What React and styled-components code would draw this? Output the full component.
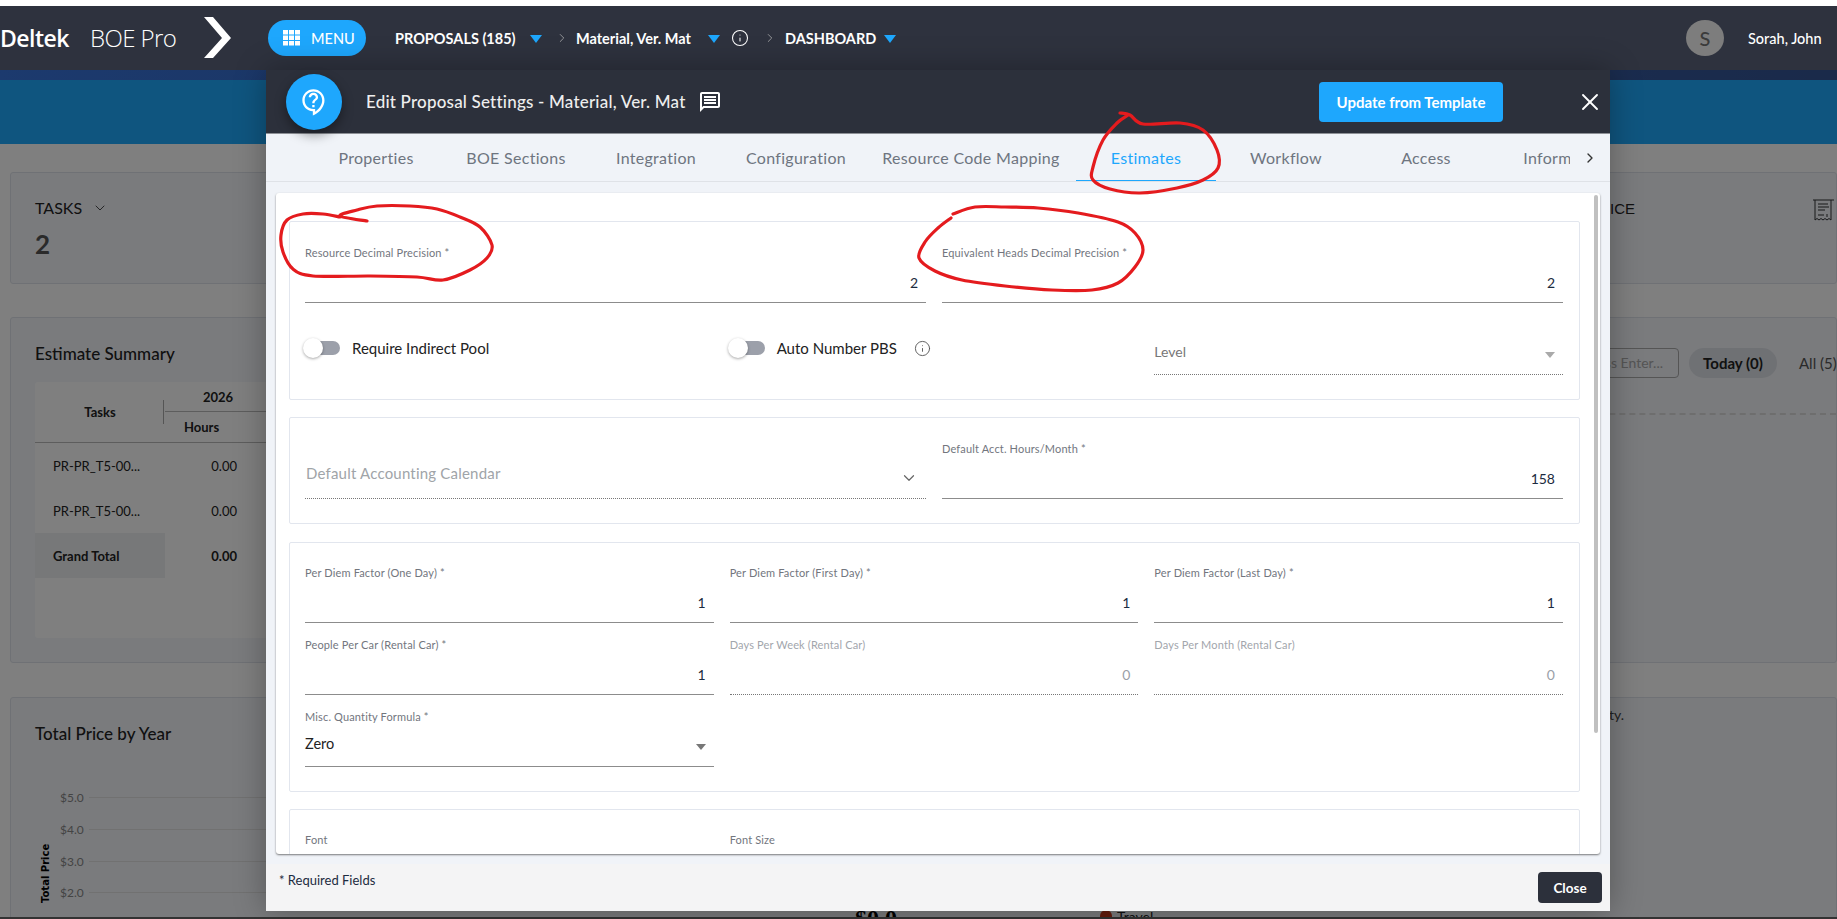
import React from "react";
import styled, { createGlobalStyle } from "styled-components";
import { ChevronDown, ChevronRight, Info, X } from "lucide-react";
import { MdOutlineContactSupport, MdOutlineMessage } from "react-icons/md";

const FONT = `"Lato", "Liberation Sans", sans-serif`;

const Global = createGlobalStyle`
  html, body { margin: 0; padding: 0; background: #fff; }
  * { box-sizing: border-box; }
  body { font-family: ${FONT}; }
`;

const Page = styled.div`
  position: relative; width: 1837px; height: 919px; overflow: hidden;
  padding-top: 6px; display: flex; flex-direction: column; background: #fff;
`;
const TopBar = styled.header`
  position: relative; z-index: 3; height: 64px; flex: none; background: #2e323e; color: #fff;
  display: flex; align-items: center;
`;
const Brand = styled.span`
  font: 600 23px/1 "Open Sans", sans-serif; margin-left: 0; letter-spacing: -0.5px; width: 90px;
`;
const Product = styled.span`
  font: 300 24px/1 "Open Sans", sans-serif; width: 114px; letter-spacing: -0.6px;
`;
const MenuPill = styled.div`
  margin-left: 36px; width: 98px; height: 36px; border-radius: 18px; background: #1ea7fd;
  display: flex; align-items: center; padding-left: 15px; gap: 10px; font-size: 14.5px; font-weight: 500;
`;
const Crumbs = styled.nav`
  margin-left: 29px; display: flex; align-items: center; font-size: 14.5px; font-weight: 700; white-space: nowrap;
`;
const Crumb = styled.span`
  width: ${(p) => p.$w}px;
`;
const Caret = styled.span`
  width: 0; height: 0; border-left: 6.5px solid transparent; border-right: 6.5px solid transparent;
  border-top: 8px solid #1ea7fd; margin: 2px ${(p) => p.$right ?? 0}px 0 ${(p) => p.$left ?? 12}px;
`;
const User = styled.div`
  margin-left: auto; display: flex; align-items: center; gap: 24px; padding-right: 9px; font-size: 14.5px; font-weight: 500; white-space: nowrap;
`;
const UserName = styled.span`
  width: 80px;
`;
const Avatar = styled.div`
  width: 38px; height: 36px; border-radius: 50%; background: #7d7d7d; color: #3b3b3b;
  display: flex; align-items: center; justify-content: center; font-size: 20px;
`;
const Band = styled.div`
  height: 10px; flex: none; background: linear-gradient(90deg, #3874dc, #345494);
`;
const Banner = styled.div`
  height: 64px; flex: none; background: #1eaaff;
`;
const Main = styled.main`
  flex: 1; min-height: 0; overflow: hidden; padding: 28px 0 0 10px; background: #fff;
  display: flex; flex-direction: column; color: #222;
`;
const Card = styled.section`
  flex: none; height: ${(p) => p.$h}px; margin-bottom: ${(p) => p.$mb ?? 0}px;
  background: #f4f6fb; border: 1px solid #dfe3ea; border-radius: 3px; display: flex;
  padding: ${(p) => p.$pad ?? "0 0 0 24px"};
`;
const StatLeft = styled.div`
  padding-top: 25px;
`;
const StatTitle = styled.div`
  font-size: 16px; display: flex; align-items: center; gap: 10px; line-height: 20px; color: #222;
`;
const StatValue = styled.div`
  font-size: 26px; line-height: 30px; font-weight: 700; color: #555; margin-top: 11px;
`;
const StatRight = styled.div`
  margin-left: auto; padding-top: 26px; display: flex; align-items: flex-start; gap: 178px; padding-right: 2px;
  font: 400 15px/20px "Liberation Sans", sans-serif;
`;
const Column = styled.div`
  display: flex; flex-direction: column; width: ${(p) => p.$w}px; flex: none;
`;
const CardTitle = styled.h3`
  margin: ${(p) => p.$top ?? 0}px 0 0; font-size: 17px; font-weight: 500; line-height: 20px; color: #222;
`;
const SummaryTable = styled.div`
  margin-top: 18px; width: 700px; height: 256px; background: #fff; border-radius: 3px; font-size: 13px; color: #222;
`;
const TableHead = styled.div`
  height: 61px; display: grid; grid-template-columns: 130px 1fr; border-bottom: 1px solid #bbb;
`;
const TasksHead = styled.div`
  font-weight: 700; display: flex; align-items: center; justify-content: center; position: relative;
  &::after { content: ""; position: absolute; right: 1px; top: 18px; height: 24px; width: 1px; background: #aaa; }
`;
const YearCol = styled.div`
  font-weight: 700; display: grid; grid-template-rows: 30px 30px;
`;
const YearCell = styled.div`
  padding-left: 38px; display: flex; align-items: center; border-bottom: 1px solid #bbb;
`;
const HoursCell = styled.div`
  padding-left: 19px; display: flex; align-items: center;
`;
const TableRow = styled.div`
  display: grid; grid-template-columns: 130px 72px; height: 45px; align-items: center;
  font-weight: ${(p) => (p.$total ? 700 : 400)};
`;
const RowLabel = styled.div`
  height: 100%; display: flex; align-items: center; padding-left: 18px;
  background: ${(p) => (p.$total ? "#eef0f3" : "transparent")};
`;
const RowValue = styled.div`
  text-align: right;
`;
const Toolbar = styled.div`
  margin-left: auto; padding-top: 30px; width: 337px; flex: none; display: flex; flex-direction: column;
`;
const ToolRow = styled.div`
  display: flex; align-items: center; height: 30px; font-size: 15px; white-space: nowrap;
`;
const Search = styled.div`
  width: 180px; height: 30px; border: 1px solid #aaa; border-radius: 4px; flex: none; text-align: right;
  padding: 5px 15px 0 0; color: #aaa; font-size: 14px;
`;
const TodayPill = styled.div`
  margin-left: 10px; width: 88px; height: 30px; line-height: 30px; text-align: center; border-radius: 15px;
  background: #dfe2e8; font-weight: 700; flex: none; color: #222;
`;
const AllLink = styled.div`
  margin-left: 22px; color: #555;
`;
const Dashed = styled.div`
  margin-top: 35px; border-top: 2px dashed #ddd;
`;
const ChartCol = styled.div`
  width: 800px; flex: none; padding-top: 26px;
`;
const Chart = styled.div`
  margin-top: 38px; display: flex; margin-left: 0;
`;
const AxisTitle = styled.div`
  font: 700 10px/11px "DejaVu Sans", sans-serif; writing-mode: vertical-rl; transform: rotate(180deg);
  margin: 64px 9px 0 5px; height: 57px; color: #000; white-space: nowrap;
`;
const AxisRows = styled.div`
  flex: 1;
`;
const AxisRow = styled.div`
  height: 31.7px; display: flex; align-items: center; gap: 5px; font-size: 12px; color: #888;
  &::after { content: ""; flex: 1; height: 1px; background: #e2e2e2; }
`;
const MiddleCol = styled.div`
  flex: none; width: 245px; margin-left: 20px; padding-top: 208px; font: 700 24px/24px "Liberation Serif", serif; color: #000;
`;
const LegendCol = styled.div`
  flex: none; padding-top: 208px; display: flex; align-items: center; height: 228px; gap: 5px; font-size: 14px; color: #222;
`;
const LegendDot = styled.span`
  width: 12px; height: 12px; border-radius: 50%; background: #c8381a;
`;
const EmptyNote = styled.div`
  margin-left: auto; padding: 8px 212px 0 0; font-size: 14px; color: #444; align-self: flex-start;
`;
const BottomStrip = styled.div`
  height: 2px; flex: none; background: #666;
`;
const Backdrop = styled.div`
  position: absolute; inset: 70px 0 0 0; background: rgba(0, 0, 0, 0.5); z-index: 2;
`;
const Modal = styled.div`
  position: absolute; z-index: 4; left: 266px; top: 70px; width: 1344px; height: 841px;
  background: #f0f3f8; display: flex; flex-direction: column; box-shadow: 0 0 30px rgba(0, 0, 0, 0.3);
`;
const ModalHead = styled.div`
  height: 64px; flex: none; background: #2c303b; color: #fff; display: flex; align-items: center;
  padding-left: 20px; border-bottom: 1px solid #8d9096;
`;
const HelpBubble = styled.div`
  width: 56px; height: 56px; border-radius: 50%; background: #1ea7fd; display: flex; align-items: center;
  justify-content: center; box-shadow: 0 5px 12px rgba(0, 0, 0, 0.4); flex: none;
`;
const ModalTitle = styled.div`
  margin-left: 24px; font-size: 17px; font-weight: 500; color: #eee; width: 319px; white-space: nowrap; letter-spacing: 0.2px;
`;
const UpdateButton = styled.button`
  margin-left: auto; width: 184px; height: 40px; border: 0; border-radius: 4px; background: #1ea7fd; color: #fff;
  font: 700 15px ${FONT};
`;
const CloseX = styled.div`
  margin: 0 5px 0 72px; width: 30px; display: flex; justify-content: center;
`;
const TabBar = styled.div`
  height: 48px; flex: none; display: flex; padding-left: 40px; border-bottom: 1px solid #dfe2e7;
`;
const TabTrack = styled.div`
  flex: 1; min-width: 0; display: flex; overflow: hidden;
`;
const Tab = styled.div`
  flex: none; width: ${(p) => p.$w ?? 140}px; height: 48px; display: flex; align-items: center; justify-content: center;
  font-size: 16px; letter-spacing: 0.3px; white-space: nowrap;
  color: ${(p) => (p.$active ? "#1ea7fd" : "#6e7580")};
  border-bottom: 2px solid ${(p) => (p.$active ? "#1ea7fd" : "transparent")};
`;
const TabMore = styled.div`
  width: 40px; flex: none; display: flex; align-items: center; justify-content: center; color: #333;
`;
const Sheet = styled.div`
  position: relative; height: 661px; flex: none; margin: 11px 10px 0; background: #fff; overflow: hidden;
  padding: 28px 20px 0 13px; border-radius: 3px; box-shadow: 0 1px 2px rgba(0, 0, 0, 0.5);
`;
const Scroll = styled.div`
  position: absolute; right: 2px; top: 2px; width: 4px; height: 538px; background: #c0c0c0; border-radius: 2px;
`;
const Group = styled.div`
  border: 1px solid #e2e6ee; border-radius: 2px; background: #fff;
  padding: ${(p) => p.$top ?? 23}px 16px 24px 15px; margin-bottom: ${(p) => p.$mb ?? 17}px;
`;
const Cols = styled.div`
  display: grid; grid-template-columns: repeat(${(p) => p.$n}, 1fr); column-gap: 16px; row-gap: 14px;
  margin-top: ${(p) => p.$mt ?? 0}px;
`;
const FieldBox = styled.div`
  height: 58px; border-bottom: 1px ${(p) => (p.$off ? "dotted #777" : "solid #8c8c8c")};
  ${(p) => p.$bare && "border-bottom: 0; height: 16px;"}
`;
const FieldLabel = styled.div`
  font-size: 11px; line-height: 16px; height: 16px; letter-spacing: 0.15px; white-space: nowrap;
  color: ${(p) => (p.$off ? "#a2a6ac" : "#72767e")};
`;
const FieldValue = styled.div`
  margin-top: 12px; padding-right: 8px; text-align: right; font-size: 14px; line-height: 20px;
  color: ${(p) => (p.$off ? "#9aa0a8" : "#1c2b40")};
`;
const SelectValue = styled.div`
  margin-top: 9px; display: flex; justify-content: space-between; align-items: center; font-size: 14.5px; line-height: 20px;
  color: #222; padding-right: 8px;
`;
const SmallCaret = styled.span`
  width: 0; height: 0; border-left: 5px solid transparent; border-right: 5px solid transparent;
  border-top: 6px solid ${(p) => p.$c ?? "#777"}; margin-top: ${(p) => p.$top ?? 6}px;
`;
const CalendarBox = styled.div`
  height: 58px; border-bottom: 1px dotted #777; padding: 22px 8px 0 1px; display: flex; justify-content: space-between;
  color: #a0a4a8; font-size: 15px; line-height: 20px; letter-spacing: 0.2px;
`;
const ToggleRow = styled.div`
  display: flex; align-items: center; height: 20px; gap: 12px; font-size: 15px; color: #222; white-space: nowrap;
`;
const Toggle = styled.span`
  position: relative; width: 35px; height: 14px; flex: none; border-radius: 7px; background: #9ca0aa;
  &::before {
    content: ""; position: absolute; left: -2px; top: -3px; width: 20px; height: 20px; border-radius: 50%;
    background: #fff; box-shadow: 0 1px 3px rgba(0, 0, 0, 0.35);
  }
`;
const LevelBox = styled.div`
  height: 37px; border-bottom: 1px dotted #777; display: flex; justify-content: space-between; padding-right: 8px;
  font-size: 14px; line-height: 28px; color: #777;
`;
const Footer = styled.div`
  margin-top: 10px; flex: 1; background: #f4f4f5; display: flex; justify-content: space-between; align-items: flex-start;
  padding: 8px 8px 0 13px;
`;
const Required = styled.div`
  font-size: 13px; line-height: 16px; color: #1c2b40;
`;
const CloseButton = styled.button`
  width: 64px; height: 31px; background: #2c303b; color: #fff; border: 0; border-radius: 4px; font: 700 13.5px ${FONT};
`;
const Marks = styled.svg`
  position: absolute; left: 0; top: 0; z-index: 5; pointer-events: none;
`;

const smooth = (pts) => {
  let d = `M${pts[0][0]} ${pts[0][1]}`;
  for (let i = 0; i < pts.length - 1; i++) {
    const p0 = pts[i - 1] || pts[i];
    const p1 = pts[i];
    const p2 = pts[i + 1];
    const p3 = pts[i + 2] || p2;
    d += ` C${p1[0] + (p2[0] - p0[0]) / 6} ${p1[1] + (p2[1] - p0[1]) / 6} ${p2[0] - (p3[0] - p1[0]) / 6} ${p2[1] - (p3[1] - p1[1]) / 6} ${p2[0]} ${p2[1]}`;
  }
  return d;
};

const RED = [
  [[367,221],[340,216],[357,210],[377,206],[410,206],[437,209],[460,217],[480,227],[492,245],[487,258],[470,270],[443,280],[417,277],[370,276],[313,276],[293,269],[283,252],[281,235],[287,220],[303,214],[323,214],[340,217]],
  [[953,214],[975,207],[1005,207],[1038,208],[1078,213],[1118,222],[1135,233],[1143,250],[1135,267],[1118,283],[1092,290],[1052,290],[1005,286],[962,280],[935,271],[919,258],[925,242],[938,228],[951,218]],
  [[1120,113],[1130,115],[1143,124],[1180,123],[1203,130],[1217,150],[1218,168],[1203,180],[1177,188],[1140,193],[1110,189],[1093,180],[1093,167],[1103,140],[1117,123],[1128,115]],
];

const GridIcon = () => (
  <svg width="18" height="16" viewBox="0 0 18 16" fill="#fff">
    {[0, 6, 12].map((x) => [0, 5.5, 11].map((y) => <rect key={`${x}-${y}`} x={x} y={y} width="5" height="4.5" />))}
  </svg>
);
const LogoChevron = () => (
  <svg width="28" height="42" viewBox="0 0 28 42" fill="#fff">
    <path d="M0 0H9L27 21L9 41H0L18 21Z" />
  </svg>
);
const ReceiptIcon = () => (
  <svg width="21" height="23" viewBox="0 0 21 23" fill="none" stroke="#333" strokeWidth="1">
    <path d="M0 1H21M2 1V21l2-1.5 2 1.5 2-1.5 2 1.5 2-1.5 2 1.5 2-1.5 2 1.5V1M5 5h10M5 8h11M5 11h7M5 16h6M14 15v3" />
  </svg>
);

const TABS = [
  ["Properties"], ["BOE Sections"], ["Integration"], ["Configuration"], ["Resource Code Mapping", 210],
  ["Estimates", 140, true], ["Workflow"], ["Access"], ["Information"],
];

const Field = ({ label, value, off, req = true }) => (
  <FieldBox $off={off}>
    <FieldLabel $off={off}>{label}{req ? " *" : ""}</FieldLabel>
    <FieldValue $off={off}>{value}</FieldValue>
  </FieldBox>
);

export default function App() {
  return (
    <Page>
      <Global />
      <TopBar>
        <Brand>Deltek</Brand>
        <Product>BOE Pro</Product>
        <LogoChevron />
        <MenuPill><GridIcon />MENU</MenuPill>
        <Crumbs>
          <Crumb $w={123}>PROPOSALS (185)</Crumb>
          <Caret />
          <ChevronRight size={14} strokeWidth={1.2} color="#bbb" style={{ margin: "0 7px 0 13px" }} />
          <Crumb $w={120}>Material, Ver. Mat</Crumb>
          <Caret />
          <Info size={18} strokeWidth={1.4} style={{ margin: "0 0 0 11px" }} />
          <ChevronRight size={14} strokeWidth={1.2} color="#bbb" style={{ margin: "0 8px 0 14px" }} />
          <Crumb $w={87}>DASHBOARD</Crumb>
          <Caret />
        </Crumbs>
        <User><Avatar>S</Avatar><UserName>Sorah, John</UserName></User>
      </TopBar>
      <Band />
      <Banner />
      <Main>
        <Card $h={112} $mb={33}>
          <StatLeft>
            <StatTitle>TASKS <ChevronDown size={16} strokeWidth={1.2} /></StatTitle>
            <StatValue>2</StatValue>
          </StatLeft>
          <StatRight>
            <span>TOTAL PRICE</span>
            <ReceiptIcon />
          </StatRight>
        </Card>
        <Card $h={346} $mb={34}>
          <Column $w={720}>
            <CardTitle $top={26}>Estimate Summary</CardTitle>
            <SummaryTable>
              <TableHead>
                <TasksHead>Tasks</TasksHead>
                <YearCol>
                  <YearCell>2026</YearCell>
                  <HoursCell>Hours</HoursCell>
                </YearCol>
              </TableHead>
              <TableRow><RowLabel>PR-PR_T5-00...</RowLabel><RowValue>0.00</RowValue></TableRow>
              <TableRow><RowLabel>PR-PR_T5-00...</RowLabel><RowValue>0.00</RowValue></TableRow>
              <TableRow $total><RowLabel $total>Grand Total</RowLabel><RowValue>0.00</RowValue></TableRow>
            </SummaryTable>
          </Column>
          <Toolbar>
            <ToolRow>
              <Search>Press Enter...</Search>
              <TodayPill>Today (0)</TodayPill>
              <AllLink>All (5)</AllLink>
            </ToolRow>
            <Dashed />
          </Toolbar>
        </Card>
        <Card $h={300}>
          <ChartCol>
            <CardTitle>Total Price by Year</CardTitle>
            <Chart>
              <AxisTitle>Total Price</AxisTitle>
              <AxisRows>
                <AxisRow>$5.0</AxisRow>
                <AxisRow>$4.0</AxisRow>
                <AxisRow>$3.0</AxisRow>
                <AxisRow>$2.0</AxisRow>
              </AxisRows>
            </Chart>
          </ChartCol>
          <MiddleCol>$0.0</MiddleCol>
          <LegendCol><LegendDot />Travel</LegendCol>
          <EmptyNote>No recent activity.</EmptyNote>
        </Card>
      </Main>
      <BottomStrip />
      <Backdrop />
      <Modal>
        <ModalHead>
          <HelpBubble><MdOutlineContactSupport size={28} color="#fff" /></HelpBubble>
          <ModalTitle>Edit Proposal Settings - Material, Ver. Mat</ModalTitle>
          <MdOutlineMessage size={24} color="#fff" style={{ marginLeft: 13 }} />
          <UpdateButton>Update from Template</UpdateButton>
          <CloseX><X size={28} color="#fff" strokeWidth={1.6} /></CloseX>
        </ModalHead>
        <TabBar>
          <TabTrack>
            {TABS.map(([t, w, a]) => <Tab key={t} $w={w} $active={a}>{t}</Tab>)}
          </TabTrack>
          <TabMore><ChevronRight size={16} /></TabMore>
        </TabBar>
        <Sheet>
          <Scroll />
          <Group>
            <Cols $n={2}>
              <Field label="Resource Decimal Precision" value="2" />
              <Field label="Equivalent Heads Decimal Precision" value="2" />
            </Cols>
            <Cols $n={3} $mt={35}>
              <ToggleRow><Toggle />Require Indirect Pool</ToggleRow>
              <ToggleRow><Toggle />Auto Number PBS<Info size={17} strokeWidth={1.3} color="#555" style={{ marginLeft: 5 }} /></ToggleRow>
              <LevelBox>Level<SmallCaret $c="#aaa" $top={14} /></LevelBox>
            </Cols>
          </Group>
          <Group $mb={18}>
            <Cols $n={2}>
              <CalendarBox>Default Accounting Calendar<ChevronDown size={18} strokeWidth={1.6} color="#666" style={{ marginTop: 6 }} /></CalendarBox>
              <Field label="Default Acct. Hours/Month" value="158" />
            </Cols>
          </Group>
          <Group $top={22}>
            <Cols $n={3}>
              <Field label="Per Diem Factor (One Day)" value="1" />
              <Field label="Per Diem Factor (First Day)" value="1" />
              <Field label="Per Diem Factor (Last Day)" value="1" />
              <Field label="People Per Car (Rental Car)" value="1" />
              <Field label="Days Per Week (Rental Car)" value="0" off req={false} />
              <Field label="Days Per Month (Rental Car)" value="0" off req={false} />
              <FieldBox>
                <FieldLabel>Misc. Quantity Formula *</FieldLabel>
                <SelectValue>Zero<SmallCaret /></SelectValue>
              </FieldBox>
            </Cols>
          </Group>
          <Group $top={22}>
            <Cols $n={3}>
              <FieldBox $bare><FieldLabel>Font</FieldLabel></FieldBox>
              <FieldBox $bare><FieldLabel>Font Size</FieldLabel></FieldBox>
            </Cols>
          </Group>
        </Sheet>
        <Footer>
          <Required>* Required Fields</Required>
          <CloseButton>Close</CloseButton>
        </Footer>
      </Modal>
      <Marks width="1837" height="919" viewBox="0 0 1837 919" fill="none" stroke="#e41b1e" strokeWidth="3.2" strokeLinecap="round" strokeLinejoin="round">
        {RED.map((r, i) => <path key={i} d={smooth(r)} />)}
      </Marks>
    </Page>
  );
}
